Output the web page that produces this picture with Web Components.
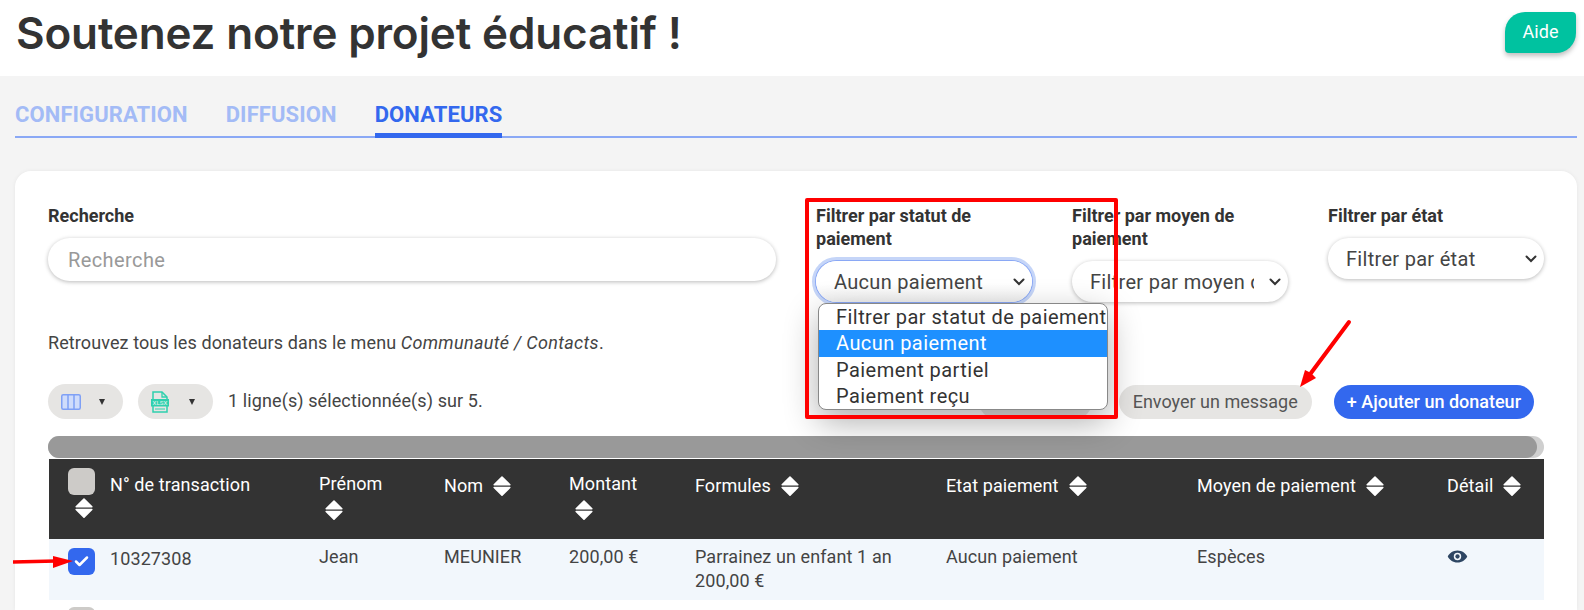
<!DOCTYPE html>
<html lang="fr">
<head>
<meta charset="utf-8">
<title>Donateurs</title>
<style>
html, body { margin: 0; height: 610px; overflow: hidden; }
body {
  background: #f4f4f4;
  color: #444;
  font-family: Roboto, "Liberation Sans", sans-serif;
  font-size: 18px;
  letter-spacing: .1px;
  position: relative;
}
</style>
</head>
<body>

<page-header>Soutenez notre projet éducatif !</page-header>

<tab-bar>
  <tab-item>Configuration</tab-item>
  <tab-item>Diffusion</tab-item>
  <tab-item active>Donateurs</tab-item>
</tab-bar>

<donor-card>
  <filter-grid>
    <filter-field label="Recherche"><search-box placeholder="Recherche"></search-box></filter-field>
    <filter-field label="Filtrer par statut de paiement">
      <select-box focused>Aucun paiement</select-box>
      <select-popup>
        <select-option>Filtrer par statut de paiement</select-option>
        <select-option selected>Aucun paiement</select-option>
        <select-option>Paiement partiel</select-option>
        <select-option>Paiement reçu</select-option>
      </select-popup>
    </filter-field>
    <filter-field label="Filtrer par moyen de paiement"><select-box>Filtrer par moyen de paiement</select-box></filter-field>
    <filter-field label="Filtrer par état"><select-box short>Filtrer par état</select-box></filter-field>
  </filter-grid>

  <help-note>Retrouvez tous les donateurs dans le menu <em>Communauté / Contacts</em>.</help-note>

  <tool-bar>
    <menu-pill icon="columns"></menu-pill>
    <menu-pill icon="xlsx"></menu-pill>
    <span slot="count">1 ligne(s) sélectionnée(s) sur 5.</span>
    <action-pill slot="end" hidden-label></action-pill>
    <action-pill slot="end">Envoyer un message</action-pill>
    <action-pill slot="end" primary>+ Ajouter un donateur</action-pill>
  </tool-bar>

  <scroll-strip></scroll-strip>

  <donor-table>
    <donor-row head>
      <donor-cell check><tick-box></tick-box><sort-icon under></sort-icon></donor-cell>
      <sort-head nosort>N° de transaction</sort-head>
      <sort-head stacked>Prénom</sort-head>
      <sort-head>Nom</sort-head>
      <sort-head stacked>Montant</sort-head>
      <sort-head>Formules</sort-head>
      <sort-head>Etat paiement</sort-head>
      <sort-head>Moyen de paiement</sort-head>
      <sort-head>Détail</sort-head>
    </donor-row>
    <donor-row>
      <donor-cell check><tick-box checked></tick-box></donor-cell>
      <donor-cell low>10327308</donor-cell>
      <donor-cell>Jean</donor-cell>
      <donor-cell>MEUNIER</donor-cell>
      <donor-cell>200,00 €</donor-cell>
      <donor-cell>Parrainez un enfant 1 an<br>200,00 €</donor-cell>
      <donor-cell>Aucun paiement</donor-cell>
      <donor-cell>Espèces</donor-cell>
      <donor-cell><eye-icon></eye-icon></donor-cell>
    </donor-row>
    <donor-row plain>
      <donor-cell check tight><tick-box></tick-box></donor-cell>
    </donor-row>
  </donor-table>
</donor-card>

<red-notes></red-notes>

<script>
// Small helper: every element gets its own open shadow root
class Base extends HTMLElement {
  constructor() {
    super();
    const template = document.createElement( 'template' );
    template.innerHTML = this.markup();
    this.attachShadow( {mode: 'open'} );
    this.shadowRoot.appendChild( template.content.cloneNode( true ) );
  }
}

// Header
class PageHeader extends Base {
  markup() {
    return `
    <style>
    :host {
      align-items: flex-start;
      background: #fff;
      box-sizing: border-box;
      display: flex;
      height: 76px;
      justify-content: space-between;
      padding: 12px 8px 0 16px;
    }
    h1 {
      color: #333;
      font: 600 44px/42px Inter, sans-serif;
      letter-spacing: -.15px;
      margin: 0;
    }
    a {
      background: #00c2a0;
      border-radius: 20px 4px 20px 4px;
      box-shadow: 0 3px 5px rgba(0,0,0,.25);
      color: #fff;
      display: block;
      height: 41px;
      line-height: 40px;
      text-align: center;
      width: 71px;
    }
    </style>
    <h1><slot></slot></h1>
    <a>Aide</a>
    `;
  }
}

// Tabs
class TabBar extends Base {
  markup() {
    return `
    <style>
    :host {
      border-bottom: 2px solid #8aa8f5;
      display: flex;
      gap: 38px;
      height: 60px;
      margin: 0 7px 33px 15px;
    }
    </style>
    <slot></slot>
    `;
  }
}

class TabItem extends Base {
  markup() {
    return `
    <style>
    :host {
      border-bottom: 3px solid transparent;
      box-sizing: border-box;
      color: #a3bbf6;
      display: block;
      font-size: 22px;
      font-weight: 700;
      height: 60px;
      letter-spacing: .1px;
      line-height: 24px;
      margin-bottom: -2px;
      padding-top: 27px;
      text-transform: uppercase;
    }
    :host([active]) { border-bottom: 5px solid #3368ee; color: #3368ee; height: 62px; }
    </style>
    <slot></slot>
    `;
  }
}

// Card
class DonorCard extends Base {
  markup() {
    return `
    <style>
    :host {
      background: #fff;
      border-radius: 16px 16px 0 0;
      box-shadow: 0 0 4px rgba(0,0,0,.06);
      box-sizing: border-box;
      display: block;
      height: 439px;
      margin: 0 7px 0 15px;
      padding: 33px 33px 0;
    }
    </style>
    <slot></slot>
    `;
  }
}

class FilterGrid extends Base {
  markup() {
    return `
    <style>
    :host {
      column-gap: 40px;
      display: grid;
      grid-template-columns: 728px 216px 216px 216px;
      height: 99px;
    }
    </style>
    <slot></slot>
    `;
  }
}

class FilterField extends Base {
  markup() {
    return `
    <style>
    :host { display: block; position: relative; }
    label {
      color: #333;
      display: block;
      font-size: 18px;
      font-weight: 700;
      letter-spacing: 0;
      line-height: 23px;
      margin-bottom: 11px;
    }
    </style>
    <label></label>
    <slot></slot>
    `;
  }
  connectedCallback() {
    this.shadowRoot.querySelector( 'label' ).textContent = this.getAttribute( 'label' );
  }
}

class SearchBox extends Base {
  markup() {
    return `
    <style>
    :host {
      background: #fff;
      border-radius: 22px;
      box-shadow: 0 1px 4px rgba(0,0,0,.28);
      box-sizing: border-box;
      color: #999;
      display: block;
      font-size: 20px;
      height: 43px;
      letter-spacing: .4px;
      line-height: 45px;
      padding-left: 20px;
    }
    </style>
    <span></span>
    `;
  }
  connectedCallback() {
    this.shadowRoot.querySelector( 'span' ).textContent = this.getAttribute( 'placeholder' );
  }
}

class SelectBox extends Base {
  markup() {
    return `
    <style>
    :host {
      align-items: center;
      background: #fff;
      border-radius: 21px;
      box-shadow: 0 1px 4px rgba(0,0,0,.28);
      box-sizing: border-box;
      color: #444;
      display: flex;
      font-size: 20px;
      height: 41px;
      letter-spacing: .3px;
      padding: 0 7px 0 18px;
    }
    :host([focused]) {
      background: linear-gradient( #fff 55%, #f0f0f0 );
      box-shadow: 0 0 0 1px #8aa8f5, 0 0 0 4px #c5d5f8;
    }
    span { flex: 1; overflow: hidden; white-space: nowrap; }
    svg { flex: none; margin-left: 15px; }
    </style>
    <span><slot></slot></span>
    <svg width="12" height="8" viewBox="0 0 12 8"><path d="M1.5 1.5 6 6l4.500-4.500" fill="none" stroke="#333" stroke-width="2" stroke-linecap="round"/></svg>
    `;
  }
}

// Open dropdown lying over the content
class SelectPopup extends Base {
  markup() {
    return `
    <style>
    :host {
      background: #fff;
      border: 1px solid #888;
      border-radius: 8px;
      box-shadow: 0 12px 34px rgba(0,0,0,.32);
      box-sizing: border-box;
      display: block;
      height: 107px;
      left: 2px;
      overflow: hidden;
      position: absolute;
      top: 99px;
      width: 290px;
      z-index: 5;
    }
    </style>
    <slot></slot>
    `;
  }
}

class SelectOption extends Base {
  markup() {
    return `
    <style>
    :host {
      color: #333;
      display: block;
      font-size: 20px;
      height: 26.25px;
      letter-spacing: .45px;
      line-height: 26px;
      padding-left: 17px;
      white-space: nowrap;
    }
    :host([selected]) { background: #1e90ff; color: #fff; }
    </style>
    <slot></slot>
    `;
  }
}

class HelpNote extends Base {
  markup() {
    return `
    <style>
    :host {
      display: block;
      letter-spacing: .1px;
      line-height: 24px;
      margin: 28px 0 29px;
    }
    ::slotted(em) { letter-spacing: .32px; }
    </style>
    <slot></slot>
    `;
  }
}

// Toolbar above the table
class ToolBar extends Base {
  markup() {
    return `
    <style>
    :host {
      align-items: center;
      display: flex;
      gap: 15px;
      height: 35px;
      margin-bottom: 17px;
    }
    ::slotted(span) { margin-bottom: 2px; }
    .end { align-items: center; display: flex; gap: 22px; margin-left: auto; margin-right: 10px; }
    </style>
    <slot></slot>
    <slot name="count"></slot>
    <div class="end"><slot name="end"></slot></div>
    `;
  }
}

class MenuPill extends Base {
  markup() {
    const columns = `<svg width="20" height="16" viewBox="0 0 20 16"><rect x=".75" y=".75" width="18.500" height="14.500" rx="1.500" fill="#cfdcfb" stroke="#7fa0f5" stroke-width="1.500"/><path d="M7 1v14M13 1v14" stroke="#7fa0f5" stroke-width="1.500"/></svg>`;
    const xlsx = `<svg width="18" height="22" viewBox="0 0 18 22"><path d="M2 8V1h9l5 5v2M2 15v6h14v-6" fill="none" stroke="#2fd0ae" stroke-width="1.500"/><path d="M11 1v5h5" fill="none" stroke="#2fd0ae" stroke-width="1.300"/><rect y="8" width="18" height="7.500" fill="#2fd0ae"/><text x="9" y="14" text-anchor="middle" font-family="Roboto, sans-serif" font-size="6.200" letter-spacing="0" fill="#e6f5f0">XLSX</text><path d="M4 18h10" stroke="#2fd0ae" stroke-width="1"/></svg>`;
    return `
    <style>
    :host {
      align-items: center;
      background: #e6e5e3;
      border-radius: 18px;
      box-sizing: border-box;
      display: flex;
      height: 35px;
      justify-content: space-between;
      padding: 0 18px 0 13px;
      width: 75px;
    }
    i { border-left: 3px solid transparent; border-right: 3px solid transparent; border-top: 6px solid #333; display: block; }
    </style>
    ${this.getAttribute( 'icon' ) === 'xlsx' ? xlsx : columns}
    <i></i>
    `;
  }
}

class ActionPill extends Base {
  markup() {
    return `
    <style>
    :host {
      background: #e6e5e3;
      border-radius: 18px;
      box-sizing: border-box;
      color: #555;
      display: block;
      height: 34px;
      letter-spacing: 0;
      line-height: 33px;
      padding: 0 14px;
      white-space: nowrap;
    }
    :host([primary]) { background: #3368ee; color: #fff; font-weight: 500; padding: 0 13px; }
    :host([hidden-label]) { margin-right: 5px; width: 113px; }
    </style>
    <slot></slot>
    `;
  }
}

class ScrollStrip extends Base {
  markup() {
    return `
    <style>
    :host {
      background: #cfcfcf;
      border-radius: 11px;
      display: block;
      height: 22px;
      margin-bottom: 1px;
    }
    div { background: #999; border-radius: 11px; height: 100%; width: 1489px; }
    </style>
    <div></div>
    `;
  }
}

// Table
class DonorTable extends Base {
  markup() {
    return `
    <style>
    :host {
      --cols: 61px 209px 125px 125px 126px 251px 251px 250px 97px;
      display: block;
      margin-left: 1px;
    }
    </style>
    <slot></slot>
    `;
  }
}

class DonorRow extends Base {
  markup() {
    return `
    <style>
    :host {
      background: #f2f7fc;
      display: grid;
      grid-template-columns: var( --cols );
      height: 61px;
    }
    :host([head]) { background: #333; color: #fff; height: 80px; }
    :host([plain]) { background: #fff; }
    </style>
    <slot></slot>
    `;
  }
}

class DonorCell extends Base {
  markup() {
    return `
    <style>
    :host { display: block; line-height: 24px; padding-top: 6px; white-space: nowrap; }
    :host([low]) { padding-top: 8px; }
    :host([check]) { padding: 9px 0 0 19px; }
    :host([check][tight]) { padding-top: 7px; }
    </style>
    <slot></slot>
    `;
  }
}

class SortHead extends Base {
  markup() {
    return `
    <style>
    :host { align-items: center; align-self: start; display: flex; gap: 10px; line-height: 24px; padding-top: 15px; }
    :host([stacked]) { align-items: flex-start; flex-direction: column; gap: 4px; padding-top: 13px; }
    :host([stacked]) sort-icon { margin-left: 6px; }
    :host([nosort]) { padding-top: 14px; }
    :host([nosort]) sort-icon { display: none; }
    </style>
    <span><slot></slot></span>
    <sort-icon></sort-icon>
    `;
  }
}

class SortIcon extends Base {
  markup() {
    return `
    <style>
    :host { display: block; height: 20px; width: 18px; }
    :host([under]) { margin: 3px 0 0 7px; }
    svg { display: block; }
    </style>
    <svg width="18" height="20" viewBox="0 0 18 20"><g fill="#fff" stroke="#fff" stroke-width="1.600" stroke-linejoin="round"><path d="M9 1 16.800 8.800H1.200z"/><path d="M1.200 11.500h15.600L9 19.200z"/></g></svg>
    `;
  }
}

class TickBox extends Base {
  markup() {
    return `
    <style>
    :host {
      background: #cdcbc8;
      border-radius: 6px;
      display: block;
      height: 27px;
      width: 27px;
    }
    :host([checked]) { background: #3368ee; }
    svg { display: none; }
    :host([checked]) svg { display: block; }
    </style>
    <svg width="27" height="27" viewBox="0 0 27 27"><path d="M8 13.500l3.500 3.500L19 9.500" fill="none" stroke="#fff" stroke-width="2.500" stroke-linecap="round" stroke-linejoin="round"/></svg>
    `;
  }
}

class EyeIcon extends Base {
  markup() {
    return `
    <style>
    :host { display: block; height: 13px; margin-top: 5px; width: 21px; }
    svg { display: block; }
    </style>
    <svg width="21" height="13" viewBox="0 0 22 14"><path fill-rule="evenodd" fill="#2e4663" d="M11 .5C6 .5 2.200 3.500.5 7c1.700 3.500 5.500 6.500 10.500 6.500S19.800 10.500 21.500 7C19.800 3.500 16 .5 11 .5zM11 3a4 4 0 1 1 0 8 4 4 0 0 1 0-8z"/><circle cx="11" cy="7" r="2.300" fill="#2e4663"/></svg>
    `;
  }
}

// Red marks drawn over the screenshot
class RedNotes extends Base {
  markup() {
    return `
    <style>
    :host { inset: 0; pointer-events: none; position: absolute; z-index: 10; }
    div {
      border: 4px solid #f00;
      border-radius: 2px;
      box-sizing: border-box;
      height: 221px;
      left: 805px;
      position: absolute;
      top: 198px;
      width: 313px;
    }
    svg { left: 0; position: absolute; top: 0; }
    </style>
    <div></div>
    <svg width="1584" height="610" viewBox="0 0 1584 610">
      <path d="M13 562 56 561" stroke="#f00" stroke-width="3.500"/>
      <path d="M53 556 73 561 53 568z" fill="#f00"/>
      <path d="M1349 322 1311 373" stroke="#f00" stroke-width="4" stroke-linecap="round"/>
      <path d="M1300 387 1305 370 1311 373 1316 378z" fill="#f00"/>
    </svg>
    `;
  }
}

window.customElements.define( 'page-header', PageHeader );
window.customElements.define( 'tab-bar', TabBar );
window.customElements.define( 'tab-item', TabItem );
window.customElements.define( 'donor-card', DonorCard );
window.customElements.define( 'filter-grid', FilterGrid );
window.customElements.define( 'filter-field', FilterField );
window.customElements.define( 'search-box', SearchBox );
window.customElements.define( 'select-box', SelectBox );
window.customElements.define( 'select-popup', SelectPopup );
window.customElements.define( 'select-option', SelectOption );
window.customElements.define( 'help-note', HelpNote );
window.customElements.define( 'tool-bar', ToolBar );
window.customElements.define( 'menu-pill', MenuPill );
window.customElements.define( 'action-pill', ActionPill );
window.customElements.define( 'scroll-strip', ScrollStrip );
window.customElements.define( 'donor-table', DonorTable );
window.customElements.define( 'donor-row', DonorRow );
window.customElements.define( 'donor-cell', DonorCell );
window.customElements.define( 'sort-icon', SortIcon );
window.customElements.define( 'sort-head', SortHead );
window.customElements.define( 'tick-box', TickBox );
window.customElements.define( 'eye-icon', EyeIcon );
window.customElements.define( 'red-notes', RedNotes );
</script>
</body>
</html>
